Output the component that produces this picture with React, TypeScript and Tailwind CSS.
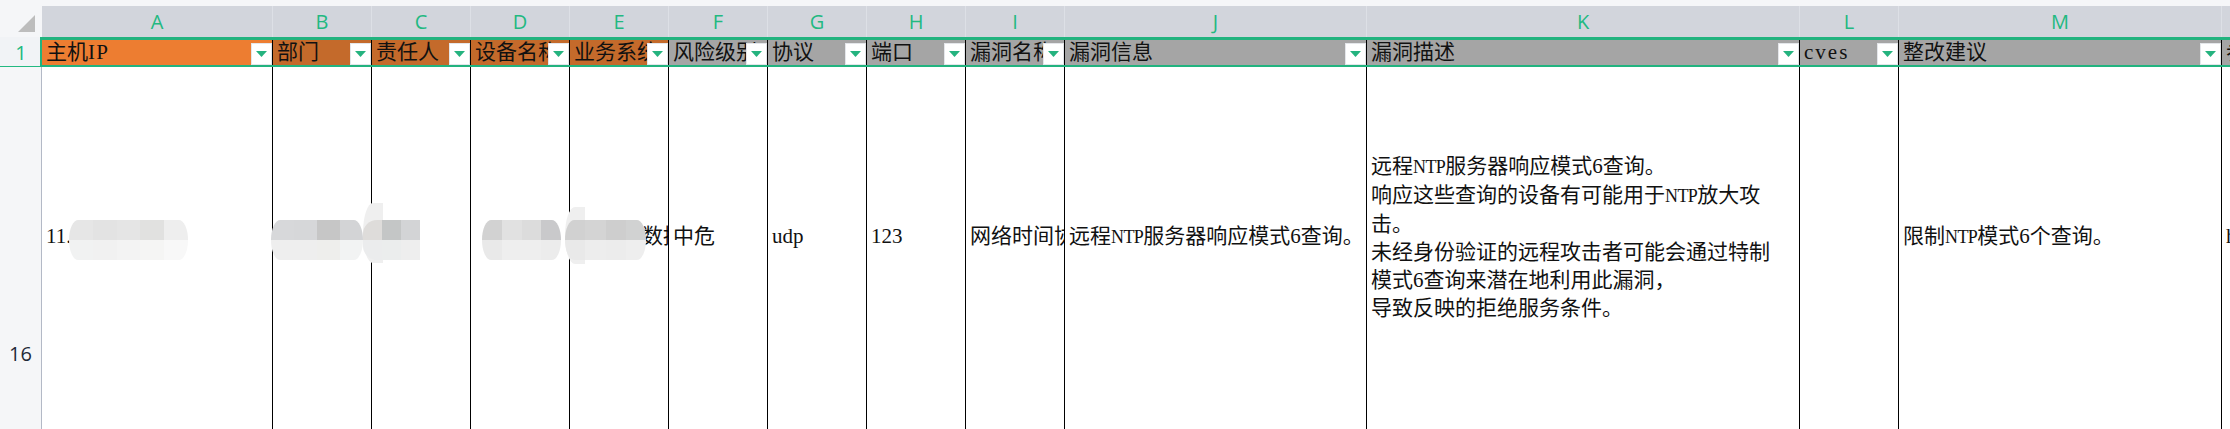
import React from 'react';

const cjk = "font-['Liberation_Serif','Noto_Sans_CJK_SC',serif]";

// NTP is half-width in the sheet, Times is wider, so shrink it a little
const Ntp = () => <span className="text-[18px] tracking-[-0.6px]">NTP</span>;

interface Col {
  letter: string;
  width: string;
  head: React.ReactNode;
  headBg: string;
  filter: boolean;
  cell?: React.ReactNode;
}

const descLines: React.ReactNode[] = [
  <>远程<Ntp />服务器响应模式6查询。</>,
  <>响应这些查询的设备有可能用于<Ntp />放大攻</>,
  <>击。</>,
  <>未经身份验证的远程攻击者可能会通过特制</>,
  <>模式6查询来潜在地利用此漏洞，</>,
  <>导致反映的拒绝服务条件。</>,
];

const orange = 'bg-[#ed7d31]';
const rust = 'bg-[#c46a2b]';
const grey = 'bg-[#a5a5a5]';

const cols: Col[] = [
  { letter: 'A', width: 'w-[231px]', head: <>主机<span className="tracking-[1.2px]">IP</span></>, headBg: orange, filter: true, cell: '11.' },
  { letter: 'B', width: 'w-[99px]', head: '部门', headBg: rust, filter: true },
  { letter: 'C', width: 'w-[99px]', head: '责任人', headBg: rust, filter: true },
  { letter: 'D', width: 'w-[99px]', head: '设备名称', headBg: rust, filter: true },
  { letter: 'E', width: 'w-[99px]', head: '业务系统', headBg: rust, filter: true, cell: <span className="block pl-[68px]">数据</span> },
  { letter: 'F', width: 'w-[99px]', head: '风险级别', headBg: grey, filter: true, cell: '中危' },
  { letter: 'G', width: 'w-[99px]', head: '协议', headBg: grey, filter: true, cell: 'udp' },
  { letter: 'H', width: 'w-[99px]', head: '端口', headBg: grey, filter: true, cell: '123' },
  { letter: 'I', width: 'w-[99px]', head: '漏洞名称', headBg: grey, filter: true, cell: '网络时间协议' },
  { letter: 'J', width: 'w-[302px]', head: '漏洞信息', headBg: grey, filter: true, cell: <>远程<Ntp />服务器响应模式6查询。</> },
  {
    letter: 'K',
    width: 'w-[433px]',
    head: '漏洞描述',
    headBg: grey,
    filter: true,
    cell: (
      <div className="leading-[28px]">
        {descLines.map((line, i) => (
          <div key={i}>{line}</div>
        ))}
      </div>
    ),
  },
  { letter: 'L', width: 'w-[99px]', head: <span className="tracking-[2px]">cves</span>, headBg: grey, filter: true },
  { letter: 'M', width: 'w-[323px]', head: '整改建议', headBg: grey, filter: true, cell: <>限制<Ntp />模式6个查询。</> },
  { letter: '', width: 'w-[9px]', head: '参考', headBg: grey, filter: false, cell: 'http' },
];

const FilterButton = () => (
  <div className="absolute right-0 bottom-0 flex h-[22px] w-[21px] items-center justify-center border border-[#e4e6ea] bg-white">
    <svg width="11" height="6" viewBox="0 0 11 6">
      <polygon points="0,0 11,0 5.5,6" fill="#25b37f" />
    </svg>
  </div>
);

interface PatchProps {
  pos: string;
  shape: string;
  top: string[];
  bottom: string[];
}

// mosaic smudges that hide the private values
const Patch: React.FC<PatchProps> = ({ pos, shape, top, bottom }) => (
  <div className={`absolute flex flex-col overflow-hidden ${pos} ${shape}`}>
    <div className="flex flex-1">
      {top.map((c, i) => (
        <div key={i} className={`flex-1 ${c}`} />
      ))}
    </div>
    <div className="flex flex-1">
      {bottom.map((c, i) => (
        <div key={i} className={`flex-1 ${c}`} />
      ))}
    </div>
  </div>
);

const patches: PatchProps[] = [
  {
    pos: 'left-[363px] top-[203px] h-[60px] w-[20px]',
    shape: 'rounded-l-[100%]',
    top: ['bg-[#efefef]'],
    bottom: ['bg-[#efefef]'],
  },
  {
    pos: 'left-[565px] top-[207px] h-[57px] w-[20px]',
    shape: 'rounded-l-[100%]',
    top: ['bg-[#efefef]'],
    bottom: ['bg-[#efefef]'],
  },
  {
    pos: 'left-[69px] top-[220px] h-[40px] w-[119px]',
    shape: 'rounded-[14px/30px]',
    top: ['bg-[#e6e6e6]', 'bg-[#e3e3e3]', 'bg-[#e5e5e5]', 'bg-[#e1e1e0]', 'bg-[#eeeeee]'],
    bottom: ['bg-[#f1f2f2]', 'bg-[#f1f1f1]', 'bg-[#f3f3f3]', 'bg-[#f5f5f4]', 'bg-[#f8f8f8]'],
  },
  {
    pos: 'left-[271px] top-[220px] h-[40px] w-[92px]',
    shape: 'rounded-[14px/30px]',
    top: ['bg-[#d7d8da]', 'bg-[#d6d7d9]', 'bg-[#c6c6c6]', 'bg-[#d3d4d6]'],
    bottom: ['bg-[#eeeeee]', 'bg-[#eeeeee]', 'bg-[#eeeeec]', 'bg-[#f2f3f3]'],
  },
  {
    pos: 'left-[363px] top-[220px] h-[40px] w-[57px]',
    shape: 'rounded-l-[14px]',
    top: ['bg-[#dedcda]', 'bg-[#c4c6c6]', 'bg-[#d3d4d6]'],
    bottom: ['bg-[#ebeced]', 'bg-[#ebeded]', 'bg-[#eeeeee]'],
  },
  {
    pos: 'left-[482px] top-[220px] h-[40px] w-[79px]',
    shape: 'rounded-[14px/30px]',
    top: ['bg-[#d2d2d2]', 'bg-[#e1e1e1]', 'bg-[#dcdcdc]', 'bg-[#c9c9cb]'],
    bottom: ['bg-[#e9e9e9]', 'bg-[#eeeeee]', 'bg-[#eeeeee]', 'bg-[#ececec]'],
  },
  {
    pos: 'left-[565px] top-[220px] h-[40px] w-[81px]',
    shape: 'rounded-[14px/30px]',
    top: ['bg-[#d1d1d1]', 'bg-[#d4d4d4]', 'bg-[#cecece]', 'bg-[#d1d2d2]'],
    bottom: ['bg-[#e9e9e9]', 'bg-[#ededed]', 'bg-[#ececec]', 'bg-[#eeeeee]'],
  },
];

export default function App() {
  return (
    <div className={`relative h-[429px] w-[2230px] overflow-hidden bg-white text-[21px] text-[#111] ${cjk}`}>
      <div className="h-[6px] bg-[#f5f6f8]" />

      {/* column letters */}
      <div className="flex h-[31px] bg-[#d2d5dc] font-['Open_Sans',sans-serif] text-[20px] text-[#22b981]">
        <div className="flex w-[42px] shrink-0 justify-end bg-[#f5f6f8] pr-[7px] pt-[9px]">
          <svg width="17" height="17" viewBox="0 0 17 17">
            <polygon points="17,0 17,17 0,17" fill="#bdbdbd" />
          </svg>
        </div>
        {cols.map((c) => (
          <div
            key={c.width + c.letter}
            className={`${c.width} flex shrink-0 items-center justify-center border-r border-[#dde0e6]`}
          >
            {c.letter}
          </div>
        ))}
      </div>

      {/* row 1, the filter header */}
      <div className="flex h-[30px]">
        <div className="flex w-[42px] shrink-0 items-center justify-center border-b border-[#22b981] bg-[#f1f3f6] pt-[3px] font-['Open_Sans',sans-serif] text-[20px] text-[#22b981]">
          1
        </div>
        <div className="flex flex-1 border-y-[3px] border-l-2 border-[#22b37f] border-b-2 -ml-[2px]">
          {cols.map((c) => (
            <div
              key={c.width + c.letter}
              className={`${c.width} ${c.headBg} relative flex shrink-0 items-center overflow-hidden whitespace-nowrap border-r border-black pl-1`}
            >
              {c.head}
              {c.filter && <FilterButton />}
            </div>
          ))}
        </div>
      </div>

      {/* row 16 */}
      <div className="flex h-[362px]">
        <div className="flex w-[42px] shrink-0 items-end justify-center border-r border-[#b3b9c6] bg-[#f5f6f8] pb-[60px] font-['Open_Sans',sans-serif] text-[20px] text-[#1f2937]">
          16
        </div>
        {cols.map((c) => (
          <div
            key={c.width + c.letter}
            className={`${c.width} flex shrink-0 items-center overflow-hidden whitespace-nowrap border-r border-black pb-[22px] pl-1`}
          >
            {c.cell}
          </div>
        ))}
      </div>

      {patches.map((p) => (
        <Patch key={p.pos} {...p} />
      ))}
    </div>
  );
}
